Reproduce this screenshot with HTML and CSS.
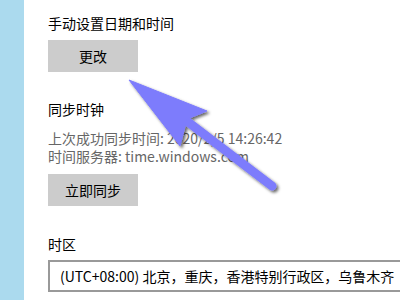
FILE: index.html
```html
<!DOCTYPE html>
<html lang="zh-CN">

<head>
    <meta charset="UTF-8">
    <title>日期和时间</title>
    <link rel="stylesheet" href="styles.css">
</head>

<body>
    <div class="page">
        <div class="side-strip"></div>

        <div class="settings">
            <div class="label">手动设置日期和时间</div>
            <button class="btn btn-change">更改</button>

            <div class="label label-sync">同步时钟</div>
            <div class="info info-first">上次成功同步时间: 2020/2/5 14:26:42</div>
            <div class="info">时间服务器: time.windows.com</div>
            <button class="btn btn-sync">立即同步</button>

            <div class="label label-zone">时区</div>
            <div class="select-box">(UTC+08:00) 北京，重庆，香港特别行政区，乌鲁木齐</div>
        </div>
    </div>

    <!-- annotation arrow drawn over the page -->
    <svg class="arrow" width="400" height="300" viewBox="0 0 400 300">
        <defs>
            <filter id="shadow" x="-20%" y="-20%" width="140%" height="140%">
                <feDropShadow dx="2" dy="2" stdDeviation="1.6" flood-color="#000" flood-opacity="0.6" />
            </filter>
        </defs>
        <g filter="url(#shadow)" fill="#7d7cfc" stroke="#7d7cfc">
            <line x1="188" y1="122" x2="272" y2="186" stroke-width="9" stroke-linecap="round" />
            <polygon points="129,80 207,111 187,119 180,146" stroke-width="1" stroke-linejoin="miter" />
        </g>
    </svg>
</body>

</html>
```

FILE: styles.css
```css
body {
    margin: 0;
    background: #fff;
    font-family: "Noto Sans CJK SC", "Noto Sans", sans-serif;
    font-size: 14px;
    color: #000;
}

.page {
    display: flex;
    width: 400px;
    height: 300px;
    overflow: hidden;
}

/* light blue edge of the window behind */
.side-strip {
    width: 24px;
    flex-shrink: 0;
    background-color: #abdaee;
}

.settings {
    flex: 1;
    padding-left: 24px;
    padding-top: 13px;
    display: flex;
    flex-direction: column;
    align-items: flex-start;
}

.label {
    line-height: 20px;
}

.label-sync {
    margin-top: 27px;
}

.label-zone {
    margin-top: 28px;
}

.info {
    line-height: 18px;
    color: #666;
}

.info-first {
    margin-top: 10px;
}

.btn {
    width: 90px;
    height: 32px;
    border: none;
    background-color: #cccccc;
    font-family: inherit;
    font-size: 14px;
    color: #000;
    padding: 0;
}

.btn-change {
    margin-top: 7px;
}

.btn-sync {
    margin-top: 9px;
}

.select-box {
    margin-top: 6px;
    width: 380px;
    height: 32px;
    box-sizing: border-box;
    border: 2px solid #999;
    padding-left: 10px;
    line-height: 28px;
    white-space: nowrap;
}

.arrow {
    position: absolute;
    left: 0;
    top: 0;
    pointer-events: none;
}
```
